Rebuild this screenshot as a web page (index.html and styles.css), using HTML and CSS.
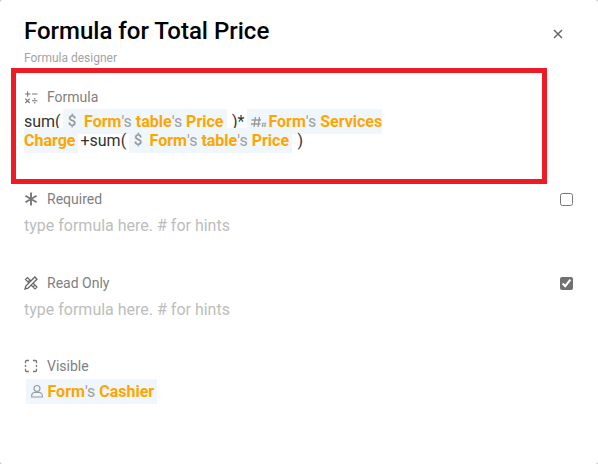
FILE: index.html
```html
<!DOCTYPE html>
<html lang="en">
<head>
<meta charset="utf-8">
<title>Formula for Total Price</title>
<link rel="stylesheet" href="styles.css">
</head>
<body>
<main class="dialog">
  <header class="head">
    <h1 class="title">Formula for Total Price</h1>
    <button class="close" type="button" aria-label="Close">
      <svg viewBox="0 0 10 10" width="10" height="10"><path d="M1 1l8 8M9 1l-8 8" fill="none" stroke="#666" stroke-width="1.500"/></svg>
    </button>
  </header>
  <p class="subtitle">Formula designer</p>

  <section class="field field-formula">
    <div class="label">
      <svg class="label-icon" viewBox="0 0 14 14"><path d="M1 4h5.400M3.700 1.300v5.400M8 4h5.400M1.300 8.600l4.400 4.400M5.700 8.600l-4.400 4.400M8 10.800h5.400" fill="none" stroke="#777" stroke-width="1.100"/><circle cx="10.700" cy="8.800" r=".8" fill="#777"/><circle cx="10.700" cy="12.800" r=".8" fill="#777"/></svg>
      <span>Formula</span>
    </div>
    <div class="value value-formula"><span>sum( </span><span class="chip chip-sum"><svg class="chip-icon" viewBox="0 0 18 16"><text x="6" y="13" text-anchor="middle" class="dollar">$</text></svg><b>Form</b>'s <b>table</b>'s <b>Price</b></span><span> )* </span><span class="chip chip-ref"><svg class="chip-icon" viewBox="0 0 18 16"><path d="M4 14l1.500-10M8 14l1.500-10M1.500 7h9.500M1 11h9.500" fill="none" stroke="#999" stroke-width="1.300"/><path d="M12.400 14l.6-4.500M14.700 14l.6-4.500M11.800 10.700h4.600M11.600 12.800h4.600" fill="none" stroke="#999" stroke-width=".8"/></svg><b>Form</b>'s <b>Services Charge</b></span><span> +sum( </span><span class="chip chip-sum"><svg class="chip-icon" viewBox="0 0 18 16"><text x="6" y="13" text-anchor="middle" class="dollar">$</text></svg><b>Form</b>'s <b>table</b>'s <b>Price</b></span><span> )</span></div>
  </section>

  <section class="field field-required">
    <div class="label">
      <svg class="label-icon" viewBox="0 0 14 14"><path d="M7 .6v12.800M1.400 3.800l11.200 6.400M12.600 3.800L1.400 10.200" fill="none" stroke="#777" stroke-width="1.900"/></svg>
      <span class="grow">Required</span>
      <input class="check" type="checkbox" aria-label="Required">
    </div>
    <div class="value placeholder">type formula here. # for hints</div>
  </section>

  <section class="field field-readonly">
    <div class="label">
      <svg class="label-icon" viewBox="0 0 14 14"><path d="M1.500 3.500l2-2L13 11l-2 2zM4 6l1.500-1.500M6.500 8.500L8 7M9 11l1.500-1.500" fill="none" stroke="#666" stroke-width="1.200"/><path d="M10.800 1l2.200 2.200L4 12.200 1 13l.8-3z" fill="#fff" stroke="#666" stroke-width="1.300"/></svg>
      <span class="grow">Read Only</span>
      <input class="check" type="checkbox" aria-label="Read Only" checked>
    </div>
    <div class="value placeholder">type formula here. # for hints</div>
  </section>

  <section class="field field-visible">
    <div class="label">
      <svg class="label-icon" viewBox="0 0 14 14"><path d="M1.500 4.200V2.500a1 1 0 0 1 1-1h2.500M9 1.500h2.500a1 1 0 0 1 1 1v1.700M12.500 6v2M12.500 9.800v1.700a1 1 0 0 1-1 1H9M5 12.500H2.500a1 1 0 0 1-1-1V9.800M1.500 6v2" fill="none" stroke="#777" stroke-width="1.300"/></svg>
      <span>Visible</span>
    </div>
    <div class="value value-visible"><span class="chip chip-user"><svg class="chip-icon" viewBox="0 0 16 16"><circle cx="8" cy="5.500" r="3" fill="none" stroke="#999" stroke-width="1.100"/><path d="M2.700 14v-1.500a3 3 0 0 1 3-3h4.600a3 3 0 0 1 3 3V14z" fill="none" stroke="#999" stroke-width="1.100"/></svg><b>Form</b>'s <b>Cashier</b></span></div>
  </section>

  <div class="highlight" aria-hidden="true"></div>
</main>
</body>
</html>
```
FILE: styles.css
```css
* { box-sizing: border-box; }
html, body { margin: 0; height: 100%; background: #c4c4c4; }
body { font-family: Roboto, "Liberation Sans", sans-serif; overflow: hidden; }
.dialog { position: relative; width: 598px; height: 464px; padding: 14px 25px 0 24px; background: #fff; border-radius: 3px; }
.head { display: flex; justify-content: space-between; align-items: center; height: 34px; }
.title { margin: 0; font-size: 24px; line-height: 34px; font-weight: 500; color: #000; }
.close { display: flex; margin: 5px 10px 0 0; padding: 0; border: 0; background: none; }
.subtitle { margin: 2px 0 0; font-size: 12px; line-height: 16px; color: #a3a3a3; }
.field-formula { margin-top: 21px; }
.field-required { margin-top: 39px; }
.field-readonly { margin-top: 38px; }
.field-visible { margin-top: 37px; }
.label { display: flex; align-items: center; height: 20px; font-size: 14px; color: #808080; }
.label-icon { width: 14px; height: 14px; margin-right: 9px; flex: none; }
.grow { flex: 1; }
.check { width: 13px; height: 13px; margin: 0; accent-color: #707070; }
.value { margin-top: 5px; font-size: 16px; line-height: 19px; color: #333; }
.value-formula { width: 380px; }
.placeholder { margin-top: 7px; color: #bdbdbd; }
.value-visible { margin-top: 6px; padding-left: 2px; }
.chip { padding: 3px 3px; background: #eff7fd; color: #a0a0a0; }
.chip b { font-weight: 700; color: #ffa500; }
.chip-sum { margin: 0 1.5px 0 -1.5px; }
.chip-ref { margin: 0 -2px 0 -1px; }
.chip-icon { display: inline-block; width: 18px; height: 16px; vertical-align: -2px; }
.chip-user .chip-icon { width: 16px; margin-right: 2.500px; }
.dollar { font: 500 15px Roboto, sans-serif; fill: #999; }
.highlight { position: absolute; left: 11px; top: 68px; width: 536px; height: 116px; border: 5px solid #ed1c24; pointer-events: none; }
```
